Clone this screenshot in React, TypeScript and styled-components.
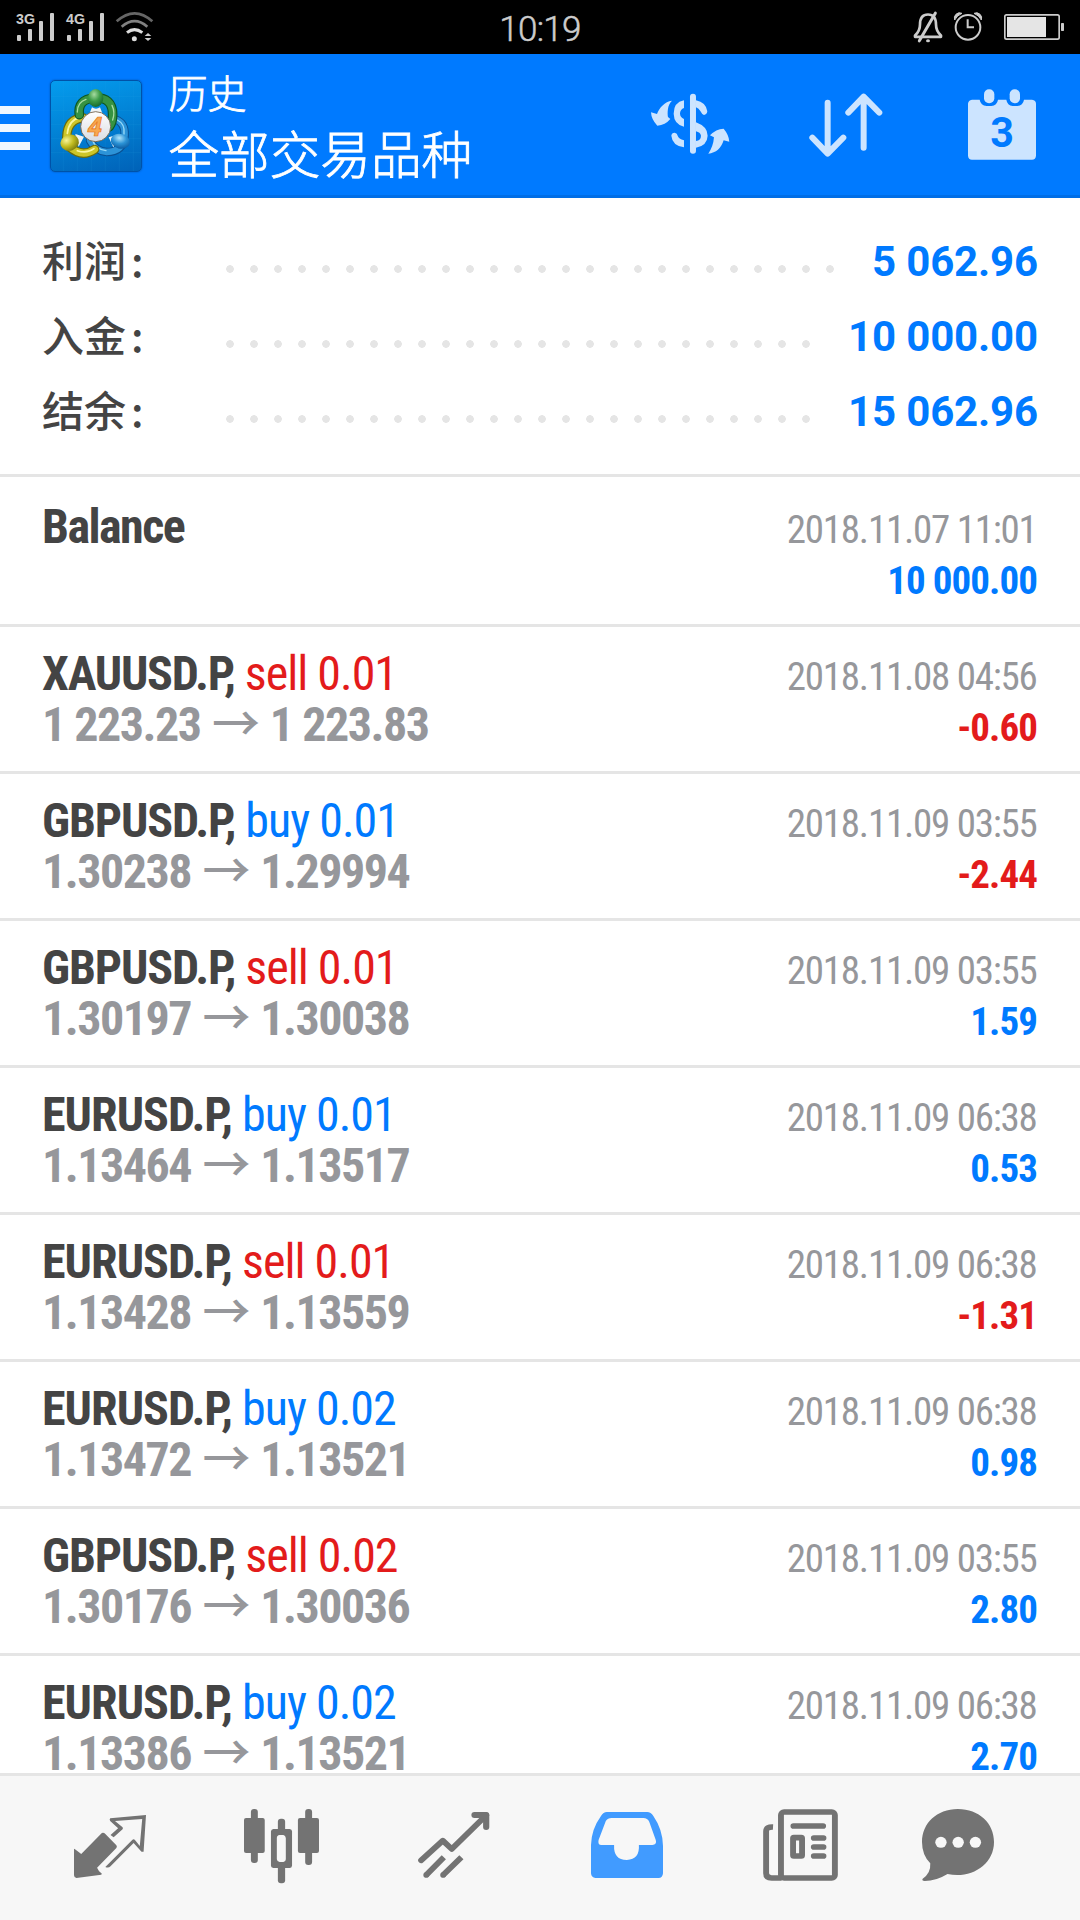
import React from "react";
import styled, { createGlobalStyle } from "styled-components";

const BLUE = "#007aff";
const RED = "#e31b1b";
const INK = "#444444";
const GRAY = "#96979b";
const LINE = "#e5e5e5";
const ICON = "#737373";
const PALE = "#cce4ff";

const Global = createGlobalStyle`
  * { box-sizing: border-box; }
  body { margin: 0; background: #ffffff; }
`;

const Screen = styled.div`
  width: 1080px;
  height: 1920px;
  display: flex;
  flex-direction: column;
  overflow: hidden;
  background: #ffffff;
  font-family: "Roboto Condensed", Roboto, "Noto Sans CJK SC", sans-serif;
`;

/* ---------- status bar ---------- */

const StatusBar = styled.div`
  flex: none;
  height: 54px;
  display: grid;
  grid-template-columns: 1fr auto 1fr;
  background: #000000;
`;

const StatusGroup = styled.div<{ $end?: boolean }>`
  display: flex;
  align-items: flex-start;
  justify-content: ${(p) => (p.$end ? "flex-end" : "flex-start")};
  padding: ${(p) => (p.$end ? "12px 16px 0 0" : "12px 0 0 16px")};
  gap: 12px;
`;

const Clock = styled.span`
  font: 300 35px/60px Roboto, sans-serif;
  letter-spacing: -0.7px;
  color: #cccccc;
  -webkit-text-stroke: 0.5px #cccccc;
`;

const Glyph = styled.svg<{ $w: number; $h: number; $ml?: number }>`
  display: block;
  flex: none;
  width: ${(p) => p.$w}px;
  height: ${(p) => p.$h}px;
  margin-left: ${(p) => p.$ml ?? 0}px;
  overflow: visible;
`;

const NetLabel = styled.text`
  font: bold 45px "Liberation Sans", Arial, sans-serif;
  fill: #cccccc;
`;

const Signal = ({ label }: { label: string }) => (
  <Glyph $w={38} $h={29} viewBox="0 0 114 87">
    <g fill="#cccccc">
      <rect x="3" y="69" width="12" height="18" rx="3" />
      <rect x="36" y="51" width="12" height="36" rx="3" />
      <rect x="69" y="27" width="12" height="60" rx="3" />
      <rect x="102" y="3" width="12" height="84" rx="3" />
    </g>
    <NetLabel x="0" y="35" textLength="57" lengthAdjust="spacingAndGlyphs">
      {label}
    </NetLabel>
  </Glyph>
);

const Wifi = () => (
  <Glyph $w={37} $h={30} viewBox="345 36 111 90">
    <g fill="none" strokeWidth="8">
      <path d="M347 64q54 -48 107 0" stroke="#666666" />
      <path d="M362 80q39 -33 77 0" stroke="#808080" />
      <path d="M378 98q22 -18 46 0" stroke="#dddddd" strokeWidth="9" />
    </g>
    <circle cx="400" cy="116" r="7.5" fill="#dddddd" />
    <path d="M431 108l10 -9l10 9zM431 114h20l-10 9z" fill="#cccccc" />
  </Glyph>
);

const Mute = () => (
  <Glyph $w={28} $h={31} viewBox="1002 36 84 92">
    <path
      d="M1005 110v-4q15-13 15-33q0-30 24-30q24 0 24 30q0 20 15 33v4z"
      fill="none"
      stroke="#cccccc"
      strokeWidth="8"
      strokeLinejoin="round"
    />
    <path d="M1018 122L1066 39" stroke="#cccccc" strokeWidth="9" strokeLinecap="round" />
    <ellipse cx="1044" cy="122" rx="6" ry="4.5" fill="#cccccc" />
  </Glyph>
);

const Alarm = () => (
  <Glyph $w={28} $h={29} viewBox="1122 38 84 87">
    <circle cx="1164" cy="84" r="37" fill="none" stroke="#cccccc" strokeWidth="6" />
    <path d="M1163 60v24h19" fill="none" stroke="#cccccc" strokeWidth="6" />
    <path
      d="M1124 62a16 16 0 0 1 22-20q-15 6-22 20zM1204 62a16 16 0 0 0-22-20q15 6 22 20z"
      fill="#cccccc"
      stroke="#cccccc"
      strokeWidth="3"
      strokeLinejoin="round"
    />
  </Glyph>
);

const Battery = () => (
  <Glyph $w={60} $h={28} $ml={10} viewBox="1272 36 180 84">
    <rect x="1274.5" y="44.5" width="163" height="73" rx="5" fill="none" stroke="#cccccc" strokeWidth="5" />
    <rect x="1281" y="51" width="117" height="60" fill="#e5e5e5" />
    <rect x="1443" y="69" width="9" height="24" rx="2" fill="#cccccc" />
  </Glyph>
);

/* ---------- header ---------- */

const Header = styled.header`
  flex: none;
  height: 144px;
  display: flex;
  align-items: flex-start;
  background: ${BLUE};
  border-bottom: 3px solid #006ee6;
`;

const MenuBars = styled.div`
  width: 30px;
  margin-top: 52px;
  display: flex;
  flex-direction: column;
  gap: 10px;
`;

const MenuBar = styled.i`
  height: 8px;
  background: #f0f7ff;
`;

const Logo = styled.div`
  width: 92px;
  height: 92px;
  margin: 26px 0 0 20px;
  border-radius: 5px;
  border: 1px solid #0052a8;
  box-shadow: 0 0 2px #0052a8;
  background: linear-gradient(165deg, #049cee 0%, #0286d9 40%, #0062b8 100%);
`;

const LogoDigit = styled.text`
  font: italic bold 78px "Open Sans", sans-serif;
  fill: #f7a850;
  stroke: #e8700f;
  stroke-width: 2px;
`;

const AppLogo = () => (
  <Logo>
    <Glyph $w={90} $h={90} viewBox="153 243 270 270">
      <defs>
        <radialGradient id="gG" cx="40%" cy="30%" r="75%">
          <stop offset="0" stopColor="#a6dba0" />
          <stop offset=".5" stopColor="#3c9c48" />
          <stop offset="1" stopColor="#11642a" />
        </radialGradient>
        <radialGradient id="gY" cx="38%" cy="30%" r="75%">
          <stop offset="0" stopColor="#f6f49a" />
          <stop offset=".5" stopColor="#c3bd22" />
          <stop offset="1" stopColor="#77780d" />
        </radialGradient>
        <radialGradient id="gB" cx="40%" cy="30%" r="75%">
          <stop offset="0" stopColor="#b0e4fb" />
          <stop offset=".5" stopColor="#2b93d6" />
          <stop offset="1" stopColor="#0a569c" />
        </radialGradient>
        <linearGradient id="gW" x1="0" y1="0" x2="0" y2="1">
          <stop offset="0" stopColor="#ffffff" />
          <stop offset="1" stopColor="#d9dce2" />
        </linearGradient>
      </defs>
      <g stroke="#35aaf0" strokeOpacity=".22" strokeWidth="1.5">
        <path d="M190 243v270M232 243v270M274 243v270M316 243v270M358 243v270M400 243v270M153 290h270M153 332h270M153 374h270M153 416h270M153 458h270" />
      </g>
      <g fill="none" strokeLinecap="round">
        <path d="M346 358q30 10 28 48q-4 50-54 50q-34-2-50-34" stroke="#0a4f91" strokeWidth="25" />
        <path d="M346 358q30 10 28 48q-4 50-54 50q-34-2-50-34" stroke="#2c93d8" strokeWidth="19" />
        <path d="M352 360q24 12 20 42M318 452q-30-4-40-30" stroke="#9adcf8" strokeWidth="4" />
        <path d="M250 354q-48 2-50 58M208 440q38 34 76 8" stroke="#6d6c0a" strokeWidth="28" />
        <path d="M250 354q-48 2-50 58M208 440q38 34 76 8" stroke="#cdc528" strokeWidth="21" />
        <path d="M240 352q-34 8-38 48M232 452q28 10 50-6" stroke="#faf6a0" strokeWidth="5" />
        <path d="M238 344q-6-46 44-50q56-4 56 50q0 22-10 36" stroke="#0d5725" strokeWidth="29" />
        <path d="M238 344q-6-46 44-50q56-4 56 50q0 22-10 36" stroke="#369342" strokeWidth="22" />
        <path d="M232 336q0-30 26-38M336 316q10 20 2 44" stroke="#a9dda4" strokeWidth="4" />
      </g>
      <path d="M276 322q12 8 24 0l8 20h-40zM226 402l26 8l-16 30q-10-20-10-38zM352 404l-26 8l14 30q12-18 12-38z" fill="#eef3f5" />
      <ellipse cx="287" cy="294" rx="23" ry="27" fill="url(#gG)" />
      <ellipse cx="209" cy="428" rx="28" ry="24" transform="rotate(-20 209 428)" fill="url(#gY)" />
      <ellipse cx="361" cy="424" rx="29" ry="22" transform="rotate(15 361 424)" fill="url(#gB)" />
      <circle cx="287" cy="380" r="45" fill="url(#gW)" stroke="#6b5a45" strokeWidth="2.5" />
      <LogoDigit x="264" y="408" textLength="42" lengthAdjust="spacingAndGlyphs">4</LogoDigit>
    </Glyph>
  </Logo>
);

const Titles = styled.div`
  flex: 1;
  margin-left: 26.5px;
  padding-top: 9px;
  display: flex;
  flex-direction: column;
  color: #ffffff;
  font-family: "Noto Sans CJK SC", sans-serif;
  font-weight: 300;
  -webkit-text-stroke: 0.8px #ffffff;
`;

const Title = styled.span`
  font-size: 39px;
  line-height: 56px;
`;

const Subtitle = styled.span`
  font-size: 50.6px;
  line-height: 66px;
`;

const Actions = styled.div`
  display: flex;
  padding: 35px 44px 0 0;
`;

const DealsIcon = () => (
  <Glyph $w={78.3} $h={72} viewBox="213 268 235 216">
    <g fill={PALE}>
      <path d="M276 303C262 315 262 340 264 352L271 358Q256 376 232 378Q214 360 213 338L231 343C238 324 254 306 276 303z" />
      <path d="M312 302Q281 308 281 342Q282 374 312 381V358Q300 354 300 341Q301 329 312 325z" />
      <path d="M274 408Q275 399 284 399Q292 400 293 408Q296 418 312 422V443Q277 438 274 408z" />
      <rect x="330" y="282" width="18" height="180" rx="9" />
      <path d="M348 302Q378 308 382 335Q381 345 372 346Q366 344 361 334Q357 326 348 323z" />
      <path fillRule="evenodd" d="M348 368Q383 381 383 408Q382 438 348 444zM348 395V424Q363 422 363 408Q361 398 348 395z" />
      <path d="M385 462Q400 440 402 413L390 407Q408 388 431 387Q447 406 448 426L431 422C424 446 408 460 385 462z" />
    </g>
  </Glyph>
);

const SortIcon = () => (
  <Glyph $w={73.3} $h={72} $ml={80} viewBox="688 268 220 216">
    <g fill="none" stroke={PALE} strokeWidth="18" strokeLinecap="round" strokeLinejoin="round">
      <path d="M744 309V461M698 414l46 48l47-48" />
      <path d="M852 444V291M806 339l46-48l47 48" />
    </g>
  </Glyph>
);

const CalendarDigit = styled.text`
  font: bold 130px Roboto, sans-serif;
  fill: ${BLUE};
`;

const CalendarIcon = () => (
  <Glyph $w={68} $h={72} $ml={85.5} viewBox="1164 268 204 216">
    <path
      fill={PALE}
      d="M1176 300H1199Q1202 318 1220 319H1234Q1251 318 1254 300H1279Q1282 318 1298 319H1312Q1329 318 1332 300H1356Q1368 301 1368 312V468Q1367 480 1356 480H1176Q1165 480 1164 468V312Q1165 301 1176 300z"
    />
    <rect x="1212" y="269" width="31" height="42" rx="15" fill={PALE} />
    <rect x="1289" y="269" width="31" height="42" rx="15" fill={PALE} />
    <CalendarDigit x="1231" y="442" textLength="71" lengthAdjust="spacingAndGlyphs">3</CalendarDigit>
  </Glyph>
);

/* ---------- summary ---------- */

const Summary = styled.section`
  flex: none;
  height: 279px;
  padding: 26px 42px 0 42px;
  border-bottom: 3px solid ${LINE};
`;

const SummaryRow = styled.div`
  height: 75px;
  display: flex;
  align-items: center;
  font: bold 42px/75px Roboto, "Noto Sans CJK SC", sans-serif;
`;

const SummaryLabel = styled.span`
  width: 180px;
  padding-bottom: 6px;
  font-family: "Noto Sans CJK SC", sans-serif;
  font-weight: 500;
  color: ${INK};
`;

const Colon = styled.span`
  margin-left: 5px;
`;

const Dots = styled.span`
  flex: 1;
  height: 8px;
  margin: 15px 24px 0 0;
  background: radial-gradient(circle at 8px 4px, #e5e5e5 3.5px, transparent 4.1px) 0 0 / 24px 8px repeat-x;
`;

const SummaryValue = styled.span`
  letter-spacing: -0.15px;
  color: ${BLUE};
`;

/* ---------- deals ---------- */

const Deals = styled.main`
  flex: 1;
  min-height: 0;
  overflow: hidden;
`;

const Deal = styled.div<{ $tall?: boolean }>`
  height: ${(p) => (p.$tall ? 150 : 147)}px;
  padding: ${(p) => (p.$tall ? 24 : 21)}px 43px 0 42px;
  border-bottom: 3px solid ${LINE};
`;

const Line = styled.div<{ $single?: boolean }>`
  height: 51px;
  padding-top: ${(p) => (p.$single ? 4 : 0)}px;
  display: flex;
  align-items: baseline;
  justify-content: ${(p) => (p.$single ? "flex-end" : "space-between")};
  font-size: 48px;
  line-height: 51px;
  white-space: nowrap;
`;

const Order = styled.span`
  display: flex;
  align-items: baseline;
  gap: 10px;
`;

const Symbol = styled.span<{ $tracking: number }>`
  font-weight: 700;
  letter-spacing: ${(p) => p.$tracking}px;
  color: ${INK};
`;

const Volume = styled.span<{ $side: "buy" | "sell" }>`
  font-weight: 400;
  letter-spacing: -1px;
  color: ${(p) => (p.$side === "buy" ? BLUE : RED)};
`;

const Prices = styled.span`
  display: flex;
  align-items: baseline;
  gap: 11.4px;
  font-weight: 700;
  letter-spacing: -1.5px;
  color: ${GRAY};
`;

const Arrow = styled.span`
  font-family: "Noto Sans CJK SC", sans-serif;
  font-weight: 500;
  letter-spacing: 0;
  line-height: 30px;
  margin-right: -1.5px;
`;

const Stamp = styled.span`
  margin-right: 0.5px;
  font-size: 39px;
  font-weight: 400;
  letter-spacing: -1.25px;
  color: ${GRAY};
`;

const Amount = styled.span<{ $loss: boolean }>`
  font-size: 39px;
  font-weight: 700;
  letter-spacing: -0.95px;
  color: ${(p) => (p.$loss ? RED : BLUE)};
`;

/* ---------- tab bar ---------- */

const Tabs = styled.nav`
  flex: none;
  height: 147px;
  display: flex;
  padding: 33px 0 0 74px;
  background: #f7f7f7;
  border-top: 3px solid ${LINE};
`;

const TabIcon = styled(Glyph).attrs({ preserveAspectRatio: "none" })``;

const TradeTabs = () => (
  <Tabs>
    <TabIcon $w={72} $h={75} viewBox="215 207 209 225">
      <path d="M299 278Q303 278 306 282L338 316Q341 320 338 324L282 383Q287 396 296 401L294 404L222 414Q215 413 215 406V326Q222 330 236 342L293 282Q296 278 299 278z" fill={ICON} />
      <path fillRule="evenodd" d="M320 235L424 225L417 335H411L388 309L321 379Q315 385 306 381L384 300Q388 295 392 300L406 318L413 237L334 243L356 262Q358 265 356 268L330 292L321 285L343 265L320 243Q317 238 320 235z" fill={ICON} />
    </TabIcon>
    <TabIcon $w={75} $h={75} $ml={98} viewBox="709 207 217 225">
      <g fill={ICON}>
        <rect x="729" y="207" width="20" height="162" rx="9" />
        <rect x="709" y="234" width="60" height="105" rx="6" />
        <rect x="886" y="207" width="20" height="168" rx="9" />
        <rect x="865" y="234" width="61" height="105" rx="6" />
        <rect x="807" y="236" width="21" height="40" rx="9" />
        <rect x="807" y="374" width="21" height="56" rx="9" />
        <path fillRule="evenodd" d="M794 267H841Q848 268 848 274V377Q847 384 841 384H794Q787 383 787 377V274Q788 268 794 267zM812 285Q804 286 804 294V358Q805 366 812 366H823Q830 365 830 358V294Q829 286 823 285z" />
      </g>
    </TabIcon>
    <TabIcon $w={71.3} $h={75} $ml={98.7} viewBox="1213 207 207 225">
      <g fill="none" stroke={ICON} strokeWidth="17">
        <path d="M1222 361L1285 302L1311 327L1411 226" strokeLinecap="round" strokeLinejoin="round" />
        <path d="M1377 225H1411V261" strokeLinecap="round" strokeLinejoin="round" strokeWidth="18" />
        <path d="M1288 352L1237 405M1339 352L1286 405" />
      </g>
      <circle cx="1237" cy="405" r="8.5" fill={ICON} />
      <circle cx="1286" cy="405" r="8.5" fill={ICON} />
    </TabIcon>
    <TabIcon $w={72} $h={75} $ml={102} viewBox="148 207 209 225">
      <path
        fillRule="evenodd"
        fill="#419bff"
        d="M194 216H311Q322 216 329 228Q356 268 357 318V400Q356 414 344 414H161Q149 413 148 400V315Q149 268 177 228Q184 216 194 216zM208 234Q196 234 191 243L170 300Q167 315 178 315H215Q213 360 252 360Q290 358 287 315H326Q340 314 336 300L317 245Q312 234 300 234z"
      />
    </TabIcon>
    <TabIcon $w={75} $h={75} $ml={100} viewBox="648 207 217 225">
      <g fill="none" stroke={ICON} strokeWidth="17">
        <rect x="700" y="216" width="156" height="198" rx="9" />
        <path d="M677 261Q657 260 657 274V400Q657 414 673 414H702" />
        <path d="M736 258H822M795 294H823M795 321H823M795 348H823" strokeLinecap="round" />
        <rect x="735" y="293" width="26" height="55" rx="2" />
      </g>
    </TabIcon>
    <TabIcon $w={72} $h={75} $ml={84} viewBox="1109 207 209 225">
      <path
        fillRule="evenodd"
        fill={ICON}
        d="M1213 207C1275 207 1318 250 1318 306C1318 375 1250 418 1183 402Q1150 423 1117 423Q1107 422 1111 416Q1135 400 1133 370Q1109 345 1109 306C1109 250 1152 207 1213 207z"
      />
      <g fill="#f7f7f7">
        <circle cx="1164" cy="307" r="16.5" />
        <circle cx="1214" cy="307" r="16.5" />
        <circle cx="1264" cy="307" r="16.5" />
      </g>
    </TabIcon>
  </Tabs>
);

/* ---------- data ---------- */

const totals = [
  { label: "利润", value: "5 062.96" },
  { label: "入金", value: "10 000.00" },
  { label: "结余", value: "15 062.96" },
];

type DealRow = {
  symbol: string;
  side: "buy" | "sell";
  volume: string;
  open: string;
  close: string;
  time: string;
  profit: string;
};

const tracking: Record<string, number> = {
  "XAUUSD.P": -1.2,
  "GBPUSD.P": -1.12,
  "EURUSD.P": -0.95,
};

const deals: DealRow[] = [
  { symbol: "XAUUSD.P", side: "sell", volume: "0.01", open: "1 223.23", close: "1 223.83", time: "2018.11.08 04:56", profit: "-0.60" },
  { symbol: "GBPUSD.P", side: "buy", volume: "0.01", open: "1.30238", close: "1.29994", time: "2018.11.09 03:55", profit: "-2.44" },
  { symbol: "GBPUSD.P", side: "sell", volume: "0.01", open: "1.30197", close: "1.30038", time: "2018.11.09 03:55", profit: "1.59" },
  { symbol: "EURUSD.P", side: "buy", volume: "0.01", open: "1.13464", close: "1.13517", time: "2018.11.09 06:38", profit: "0.53" },
  { symbol: "EURUSD.P", side: "sell", volume: "0.01", open: "1.13428", close: "1.13559", time: "2018.11.09 06:38", profit: "-1.31" },
  { symbol: "EURUSD.P", side: "buy", volume: "0.02", open: "1.13472", close: "1.13521", time: "2018.11.09 06:38", profit: "0.98" },
  { symbol: "GBPUSD.P", side: "sell", volume: "0.02", open: "1.30176", close: "1.30036", time: "2018.11.09 03:55", profit: "2.80" },
  { symbol: "EURUSD.P", side: "buy", volume: "0.02", open: "1.13386", close: "1.13521", time: "2018.11.09 06:38", profit: "2.70" },
];

export default function App() {
  return (
    <Screen>
      <Global />
      <StatusBar>
        <StatusGroup>
          <Signal label="3G" />
          <Signal label="4G" />
          <Wifi />
        </StatusGroup>
        <Clock>10:19</Clock>
        <StatusGroup $end>
          <Mute />
          <Alarm />
          <Battery />
        </StatusGroup>
      </StatusBar>

      <Header>
        <MenuBars>
          <MenuBar />
          <MenuBar />
          <MenuBar />
        </MenuBars>
        <AppLogo />
        <Titles>
          <Title>历史</Title>
          <Subtitle>全部交易品种</Subtitle>
        </Titles>
        <Actions>
          <DealsIcon />
          <SortIcon />
          <CalendarIcon />
        </Actions>
      </Header>

      <Summary>
        {totals.map((t) => (
          <SummaryRow key={t.label}>
            <SummaryLabel>
              {t.label}
              <Colon>:</Colon>
            </SummaryLabel>
            <Dots />
            <SummaryValue>{t.value}</SummaryValue>
          </SummaryRow>
        ))}
      </Summary>

      <Deals>
        <Deal $tall>
          <Line>
            <Symbol $tracking={-1.55}>Balance</Symbol>
            <Stamp>2018.11.07 11:01</Stamp>
          </Line>
          <Line $single>
            <Amount $loss={false}>10 000.00</Amount>
          </Line>
        </Deal>
        {deals.map((d, i) => (
          <Deal key={i}>
            <Line>
              <Order>
                <Symbol $tracking={tracking[d.symbol]}>{d.symbol},</Symbol>
                <Volume $side={d.side}>
                  {d.side} {d.volume}
                </Volume>
              </Order>
              <Stamp>{d.time}</Stamp>
            </Line>
            <Line>
              <Prices>
                <span>{d.open}</span>
                <Arrow>→</Arrow>
                <span>{d.close}</span>
              </Prices>
              <Amount $loss={d.profit.startsWith("-")}>{d.profit}</Amount>
            </Line>
          </Deal>
        ))}
      </Deals>

      <TradeTabs />
    </Screen>
  );
}
